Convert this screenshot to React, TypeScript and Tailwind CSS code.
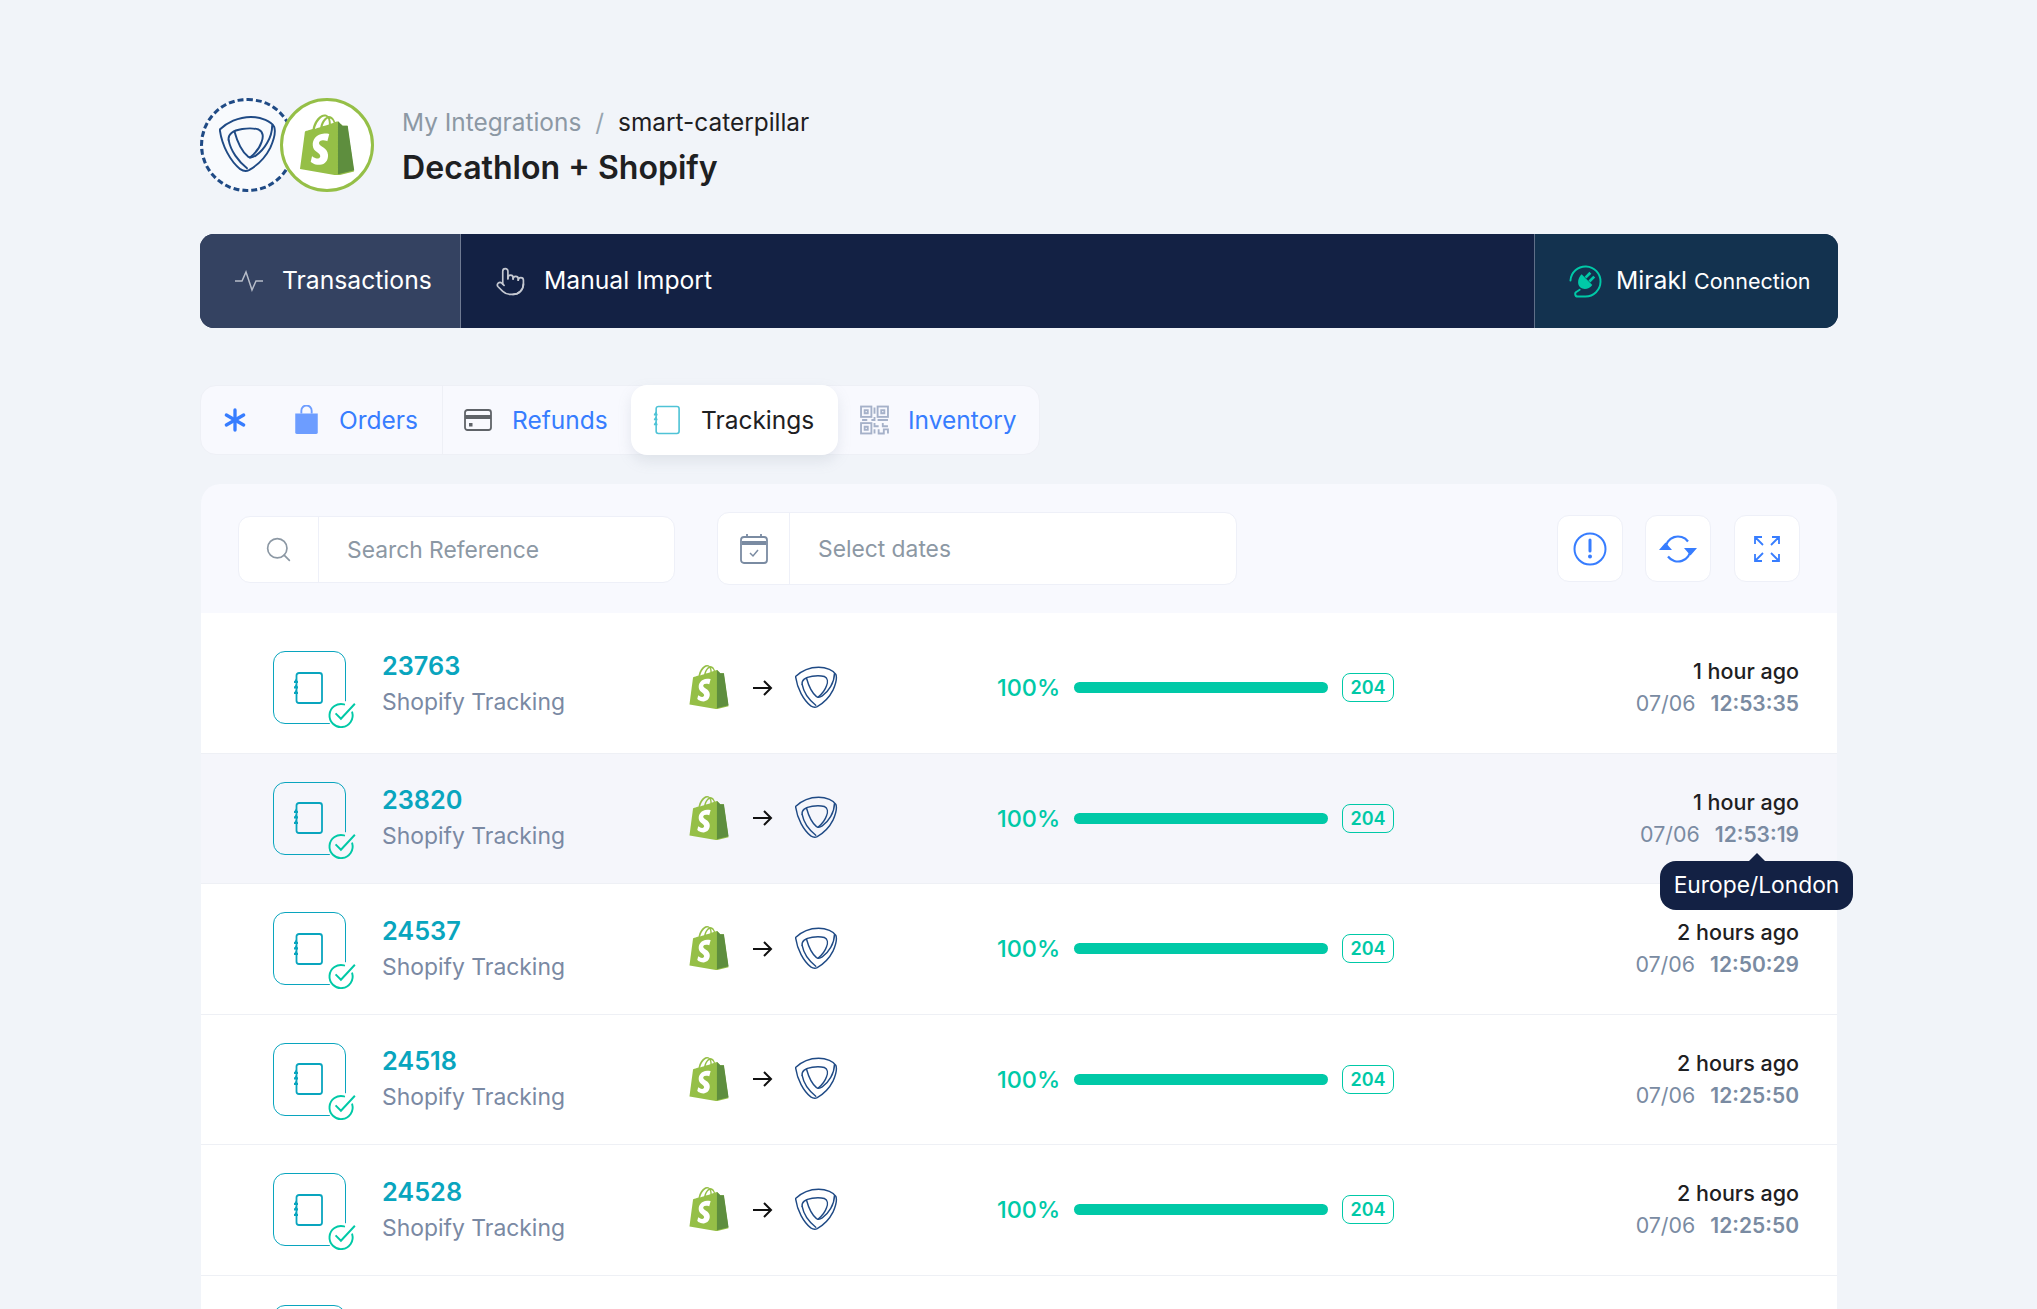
import { Asterisk, Pointer, Search } from 'lucide-react';

interface Transaction {
  id: string;
  ago: string;
  date: string;
  time: string;
  tooltip?: boolean;
  hover?: boolean;
}

const rows: Transaction[] = [
  { id: '23763', ago: '1 hour ago', date: '07/06', time: '12:53:35' },
  { id: '23820', ago: '1 hour ago', date: '07/06', time: '12:53:19', tooltip: true, hover: true },
  { id: '24537', ago: '2 hours ago', date: '07/06', time: '12:50:29' },
  { id: '24518', ago: '2 hours ago', date: '07/06', time: '12:25:50' },
  { id: '24528', ago: '2 hours ago', date: '07/06', time: '12:25:50' },
];

const ShopifyBag = ({ className }: { className?: string }) => (
  <svg viewBox="0 0 109 124" className={className}>
    <path
      fill="#95BF47"
      d="M95.6 28.2c-.1-.6-.6-1-1.1-1-.5 0-9.3-.2-9.3-.2s-7.4-7.2-8.1-7.9c-.7-.7-2.2-.5-2.7-.3 0 0-1.4.4-3.7 1.1-.4-1.3-1-2.8-1.8-4.4-2.6-5-6.5-7.7-11.1-7.7-.3 0-.6 0-1 .1-.1-.2-.3-.3-.4-.5C54.4 5.6 51.9 4.7 48.9 4.8c-5.8.2-11.6 4.4-16.3 11.8-3.3 5.2-5.8 11.7-6.5 16.8-6.7 2.1-11.4 3.5-11.5 3.6-3.4 1.1-3.5 1.2-3.9 4.4-.3 2.4-9.2 70.9-9.2 70.9l74.1 12.8 32.1-8s-12.6-85.7-12.7-86.3zM67.7 21.4c-1.7.5-3.6 1.1-5.7 1.8 0-2.9-.4-7-1.8-10.5 4.5.9 6.7 6 7.5 8.7zm-9.6 3c-3.9 1.2-8.1 2.5-12.3 3.8 1.2-4.6 3.5-9.2 6.3-12.2 1-1.1 2.5-2.3 4.2-3 1.6 3.4 2 8.2 1.8 11.4zM50.1 8.9c1.4 0 2.6.3 3.6.9-1.6.8-3.2 2.1-4.7 3.7-3.8 4.1-6.7 10.4-7.9 16.6-3.6 1.1-7.2 2.2-10.4 3.2 2.1-9.7 10.3-24.1 19.4-24.4z"
    />
    <path
      fill="#5E8E3E"
      d="M94.5 27.2c-.5 0-9.3-.2-9.3-.2s-7.4-7.2-8.1-7.9c-.3-.3-.6-.4-1-.5v104.1l32.1-8s-12.6-85.7-12.7-86.3c-.1-.6-.6-1-1-1.1z"
    />
    <path
      fill="#fff"
      d="M58.9 43.5l-3.7 13.9s-4.1-1.9-9.1-1.6c-7.2.5-7.3 5-7.2 6.2.4 6.2 16.7 7.6 17.6 22.1.7 11.4-6 19.2-15.8 19.8-11.8.7-18.2-6.2-18.2-6.2l2.5-10.6s6.5 4.9 11.7 4.6c3.4-.2 4.6-3 4.5-4.9-.5-8.1-13.8-7.6-14.7-20.9-.7-11.2 6.6-22.5 22.9-23.5 6.3-.5 9.5 1.1 9.5 1.1z"
    />
  </svg>
);

const DecathlonMark = ({ className }: { className?: string }) => (
  <svg viewBox="0 0 60 60" fill="none" stroke="#1f4a85" strokeWidth="2" strokeLinecap="round" className={className}>
    <path d="M.8 14C8 7 20 1 33 1c11 0 21 5 24 10 2 5 0 13-4 22-6 12-15 19-22 23-3 1.500-6 1-9-1C12 47 3 31 .8 14z" />
    <path d="M10 25c-1-6 4-10 14-11.500 6-1 12-1 17 .5 5 2 5 8 3 13-2 6-7 12-12 16" />
    <path d="M16 16c3 11 8 21 14 26 3 2 5 1 8-1 9-6 17-19 17-31" />
    <path d="M10 25c2 11 10 22 19 29" />
  </svg>
);

const NotebookIcon = ({ className, stroke = '#09a5be' }: { className?: string; stroke?: string }) => (
  <svg viewBox="0 0 30 32" fill="none" className={className}>
    <rect x="3.500" y="1" width="25.500" height="30" rx="2.500" stroke={stroke} strokeWidth="1.800" />
    <path d="M1 10h4M1 15.500h4M1 21h4" stroke={stroke} strokeWidth="1.800" />
    <path d="M3 6.500l1.800 3H1.200zM3 12l1.800 3H1.200zM3 17.500l1.800 3H1.200z" fill={stroke} />
  </svg>
);

const CheckBadge = () => (
  <svg viewBox="0 0 28 26" fill="none" className="h-[28px] w-[30px]">
    <path d="M23.500 10.500A10.800 10.800 0 1 1 16 3.100" stroke="#00c9a7" strokeWidth="1.800" strokeLinecap="round" />
    <path d="M8 11.500l5 5L26 2.500" stroke="#00c9a7" strokeWidth="1.800" />
  </svg>
);

const TabDivider = () => <div className="h-full w-px bg-[#eef0f6]" />;

const ToolButton = ({ children, className }: { children: React.ReactNode; className?: string }) => (
  <button className={`flex h-[67px] w-[66px] items-center justify-center rounded-xl border border-[#eef0f8] bg-white ${className ?? ''}`}>
    {children}
  </button>
);

const DocTile = ({ bg }: { bg: string }) => (
  <div className={`relative flex h-[73px] w-[73px] shrink-0 items-center justify-center rounded-xl border-[1.5px] border-[#09a5be] ${bg}`}>
    <NotebookIcon className="mr-[3px] h-[32px] w-[30px]" />
    <span className={`absolute -bottom-[6px] -right-[12px] flex rounded-full ${bg}`}>
      <CheckBadge />
    </span>
  </div>
);

const Row = ({ row, index }: { row: Transaction; index: number }) => (
  <div
    className={`relative flex shrink-0 items-center border-b border-[#eef0f5] pl-[72px] pr-[38px] ${
      index === 0 ? 'h-[140.5px] pt-[10px]' : 'h-[130.5px]'
    } ${row.hover ? 'bg-[#f5f6fb]' : 'bg-white'}`}
  >
    <DocTile bg={row.hover ? 'bg-[#f5f6fb]' : 'bg-white'} />
    <div className={`ml-[36px] w-[307px] shrink-0 ${index === 0 ? '-mt-[8px]' : ''}`}>
      <div className="text-[25.3px] font-semibold leading-[34px] text-[#09a5be]">{row.id}</div>
      <div className="mt-[2px] text-[22.9px] leading-[34px] text-[#7a89a3]">Shopify Tracking</div>
    </div>
    <ShopifyBag className="mb-[3px] h-[46px] w-[40px] shrink-0" />
    <svg viewBox="0 0 20 16" fill="none" stroke="#111" strokeWidth="2" className="ml-[24px] h-[16px] w-[20px] shrink-0">
      <path d="M0 8h18M11 1l7 7-7 7" />
    </svg>
    <DecathlonMark className="ml-[22px] h-[44px] w-[43px] shrink-0" />
    <div className="ml-[159px] flex shrink-0 items-center">
      <span className="w-[77px] text-[23.4px] font-medium text-[#00c9a7]">100%</span>
      <div className="h-[11px] w-[254px] rounded-full bg-[#00c9a7]" />
      <span className="ml-[14px] flex h-[29px] w-[52px] items-center justify-center rounded-lg border border-[#00c9a7] text-[18px] font-semibold text-[#00c9a7]">
        204
      </span>
    </div>
    <div className="relative flex-1 text-right">
      <div className="text-[21.5px] font-medium leading-[32px] text-[#1e2022]">{row.ago}</div>
      <div className="text-[21.4px] leading-[32px] text-[#7a8ba2]">
        {row.date}
        <span className="ml-[15px] text-[21px] font-semibold text-[#7a8ba2]">{row.time}</span>
      </div>
      {row.tooltip && (
        <div className="absolute -right-[54px] top-[75px] z-10 flex h-[49px] w-[193px] items-center justify-center rounded-2xl bg-[#132144] text-[22.8px] text-white">
          <span className="absolute -top-[8px] left-1/2 h-0 w-0 -translate-x-1/2 border-x-[9px] border-b-[9px] border-x-transparent border-b-[#132144]" />
          Europe/London
        </div>
      )}
    </div>
  </div>
);

export default function App() {
  return (
    <div className="h-[1309px] overflow-hidden bg-[#f1f4f9] pl-[200px] pr-[199px] pt-[98px] font-['Inter',sans-serif]">
      {/* Header */}
      <div className="flex items-center">
        <div className="relative h-[94px] w-[175px] shrink-0">
          <div className="flex h-[94px] w-[95px] items-center justify-center rounded-full border-[3px] border-dashed border-[#1f4a85] bg-[#f8fafd]">
            <DecathlonMark className="h-[58px] w-[58px]" />
          </div>
          <div className="absolute left-[80px] top-0 flex h-[94px] w-[94px] items-center justify-center rounded-full border-[3.5px] border-[#95bf47] bg-white">
            <ShopifyBag className="mb-[3px] h-[63px] w-[56px]" />
          </div>
        </div>
        <div className="ml-[27px] pt-[3px]">
          <div className="flex items-center text-[24.4px] leading-[36px]">
            <span className="text-[#8c98a4]">My Integrations</span>
            <span className="mx-[14px] text-[#97a4af]">/</span>
            <span className="text-[#1e2022]">smart-caterpillar</span>
          </div>
          <div className="mt-[7px] text-[32.1px] font-semibold leading-[42px] text-[#1e2022]">Decathlon + Shopify</div>
        </div>
      </div>

      {/* Main nav */}
      <div className="mt-[42px] flex h-[94px] overflow-hidden rounded-[14px] bg-[#132144] text-[24.7px] text-white">
        <div className="flex w-[261px] items-center border-r border-[#6f7a92] bg-[#344261] pl-[35px]">
          <svg viewBox="0 0 28 22" fill="none" stroke="#b7bdc9" strokeWidth="1.500" className="h-[22px] w-[28px]">
            <path d="M0 11h7l4-9 6 18 4-9h7" />
          </svg>
          <span className="ml-[19px]">Transactions</span>
        </div>
        <div className="flex flex-1 items-center pl-[34px]">
          <Pointer className="h-[31px] w-[31px] text-[#c4c8d1]" strokeWidth={1.3} />
          <span className="ml-[18px]">Manual Import</span>
        </div>
        <div className="flex w-[304px] items-center border-l border-[#5f6f88] bg-[#13324f] pl-[34px]">
          <svg viewBox="0 0 34 34" fill="none" className="h-[33px] w-[33px]">
            <path d="M1.500 16A15.500 15.500 0 1 1 17 32.500H9c-3 0-3.500-4-1-5l3-2" stroke="#00c9a7" strokeWidth="2" strokeLinecap="round" />
            <path d="M13 9.500L24 20.500C21 25 15 26 11.500 23 8 19.500 9 13.500 13 9.500z" fill="#00c9a7" />
            <path d="M17 13l5-5M21 17l5-5" stroke="#00c9a7" strokeWidth="2.800" />
          </svg>
          <span className="ml-[14px]">Mirakl <span className="text-[21.5px]">Connection</span></span>
        </div>
      </div>

      {/* Sub tabs */}
      <div className="mt-[57px] flex h-[70px] w-[840px] items-center rounded-2xl border border-[#eef0f6] bg-[#f8f9fe] text-[24.5px] text-[#377dff]">
        <div className="flex w-[241px] items-center pl-[14px]">
          <Asterisk className="h-[40px] w-[40px]" strokeWidth={2} />
          <svg viewBox="0 0 26 32" className="ml-[39px] h-[30px] w-[25px]">
            <path d="M7.500 9V6a5.500 5.500 0 0 1 11 0v3" fill="none" stroke="#6d9dff" strokeWidth="2" />
            <path d="M1 9h24v20a2 2 0 0 1-2 2H3a2 2 0 0 1-2-2z" fill="#6d9dff" />
          </svg>
          <span className="ml-[20px]">Orders</span>
        </div>
        <TabDivider />
        <div className="flex w-[188px] items-center pl-[21px]">
          <svg viewBox="0 0 28 22" fill="none" className="h-[22px] w-[28px]">
            <rect x="1" y="1" width="26" height="20" rx="2.500" stroke="#5f6368" strokeWidth="1.800" />
            <path d="M1 6h26v4H1z" fill="#5f6368" />
            <rect x="5" y="14" width="3.500" height="3.500" fill="#5f6368" />
          </svg>
          <span className="ml-[20px]">Refunds</span>
        </div>
        <div className="z-10 flex h-[70px] w-[207px] items-center rounded-2xl bg-white pl-[22px] text-[#1e2022] shadow-[0_6px_14px_rgba(140,152,164,0.18)]">
          <NotebookIcon className="h-[30px] w-[27px]" stroke="#4fc3d6" />
          <span className="ml-[21px]">Trackings</span>
        </div>
        <div className="flex flex-1 items-center pl-[22px]">
          <svg viewBox="0 0 28 28" fill="none" stroke="#a5b1c9" strokeWidth="1.800" className="h-[30px] w-[29px]">
            <rect x="1" y="1" width="10" height="10" />
            <rect x="17" y="1" width="10" height="10" />
            <rect x="1" y="17" width="10" height="10" />
            <path d="M4.500 4.500h3v3h-3zM20.500 4.500h3v3h-3zM4.500 20.500h3v3h-3zM14 2v6M14 11v3h-3M2 14h5M17 14h10M14 17v3h4M22 17v3h5M14 23v4M18 23v4h5v-4h4v4" />
          </svg>
          <span className="ml-[19px]">Inventory</span>
        </div>
      </div>

      {/* Panel */}
      <div className="mt-[29px] rounded-t-[20px] border-x border-[#f1f4f9] bg-[#f8f9fe]">
        <div className="flex h-[129px] items-center pl-[37px] pr-[37px]">
          <div className="mt-[1px] flex h-[67px] w-[437px] items-center rounded-xl border border-[#eef0f8] bg-white">
            <div className="flex h-full w-[80px] items-center justify-center border-r border-[#eef0f8]">
              <Search className="h-[29px] w-[29px] text-[#8c98a4]" strokeWidth={1.4} />
            </div>
            <span className="ml-[28px] mt-[2px] text-[22.8px] text-[#8c98a4]">Search Reference</span>
          </div>
          <div className="ml-[42px] flex h-[73px] w-[520px] items-center rounded-xl border border-[#eef0f8] bg-white">
            <div className="flex h-full w-[72px] items-center justify-center border-r border-[#eef0f8]">
              <svg viewBox="0 0 28 30" fill="none" className="h-[30px] w-[28px]">
                <rect x="1" y="3" width="26" height="26" rx="3" stroke="#7a8ba2" strokeWidth="1.800" />
                <path d="M2 7h24v4H2z" fill="#7a8ba2" />
                <path d="M7 0v3M21 0v3" stroke="#7a8ba2" strokeWidth="1.800" />
                <path d="M10 19l3 3 5-6" stroke="#7a8ba2" strokeWidth="1.500" />
              </svg>
            </div>
            <span className="ml-[28px] mt-[2px] text-[22.8px] text-[#8c98a4]">Select dates</span>
          </div>
          <div className="ml-auto flex">
            <ToolButton>
              <svg viewBox="0 0 34 34" fill="none" className="h-[34px] w-[34px]">
                <circle cx="17" cy="17" r="15.500" stroke="#377dff" strokeWidth="2" />
                <path d="M17 8v11" stroke="#377dff" strokeWidth="3" strokeLinecap="round" />
                <circle cx="17" cy="24.500" r="2" fill="#377dff" />
              </svg>
            </ToolButton>
            <ToolButton className="ml-[22px]">
              <svg viewBox="0 0 38 32" fill="none" className="h-[32px] w-[38px]">
                <path d="M6.500 16A12.500 12.500 0 0 1 29 8.500M31.500 16A12.500 12.500 0 0 1 9 23.500" stroke="#377dff" strokeWidth="2.200" />
                <path d="M25 15h13l-6.500 7.500zM0 17h13L6.500 9.500z" fill="#377dff" />
              </svg>
            </ToolButton>
            <ToolButton className="ml-[23px]">
              <svg viewBox="0 0 26 26" fill="none" stroke="#377dff" strokeWidth="1.800" className="h-[26px] w-[26px]">
                <path d="M1 8V1h7M1 1l8 8M18 1h7v7M25 1l-8 8M1 18v7h7M1 25l8-8M25 18v7h-7M25 25l-8-8" />
              </svg>
            </ToolButton>
          </div>
        </div>
        <div className="flex flex-col">
          {rows.map((row, i) => (
            <Row key={row.id} row={row} index={i} />
          ))}
          {/* next row is cut by the fold, only its tile shows */}
          <div className="h-[40px] bg-white pl-[72px] pt-[29px]">
            <DocTile bg="bg-white" />
          </div>
        </div>
      </div>
    </div>
  );
}
